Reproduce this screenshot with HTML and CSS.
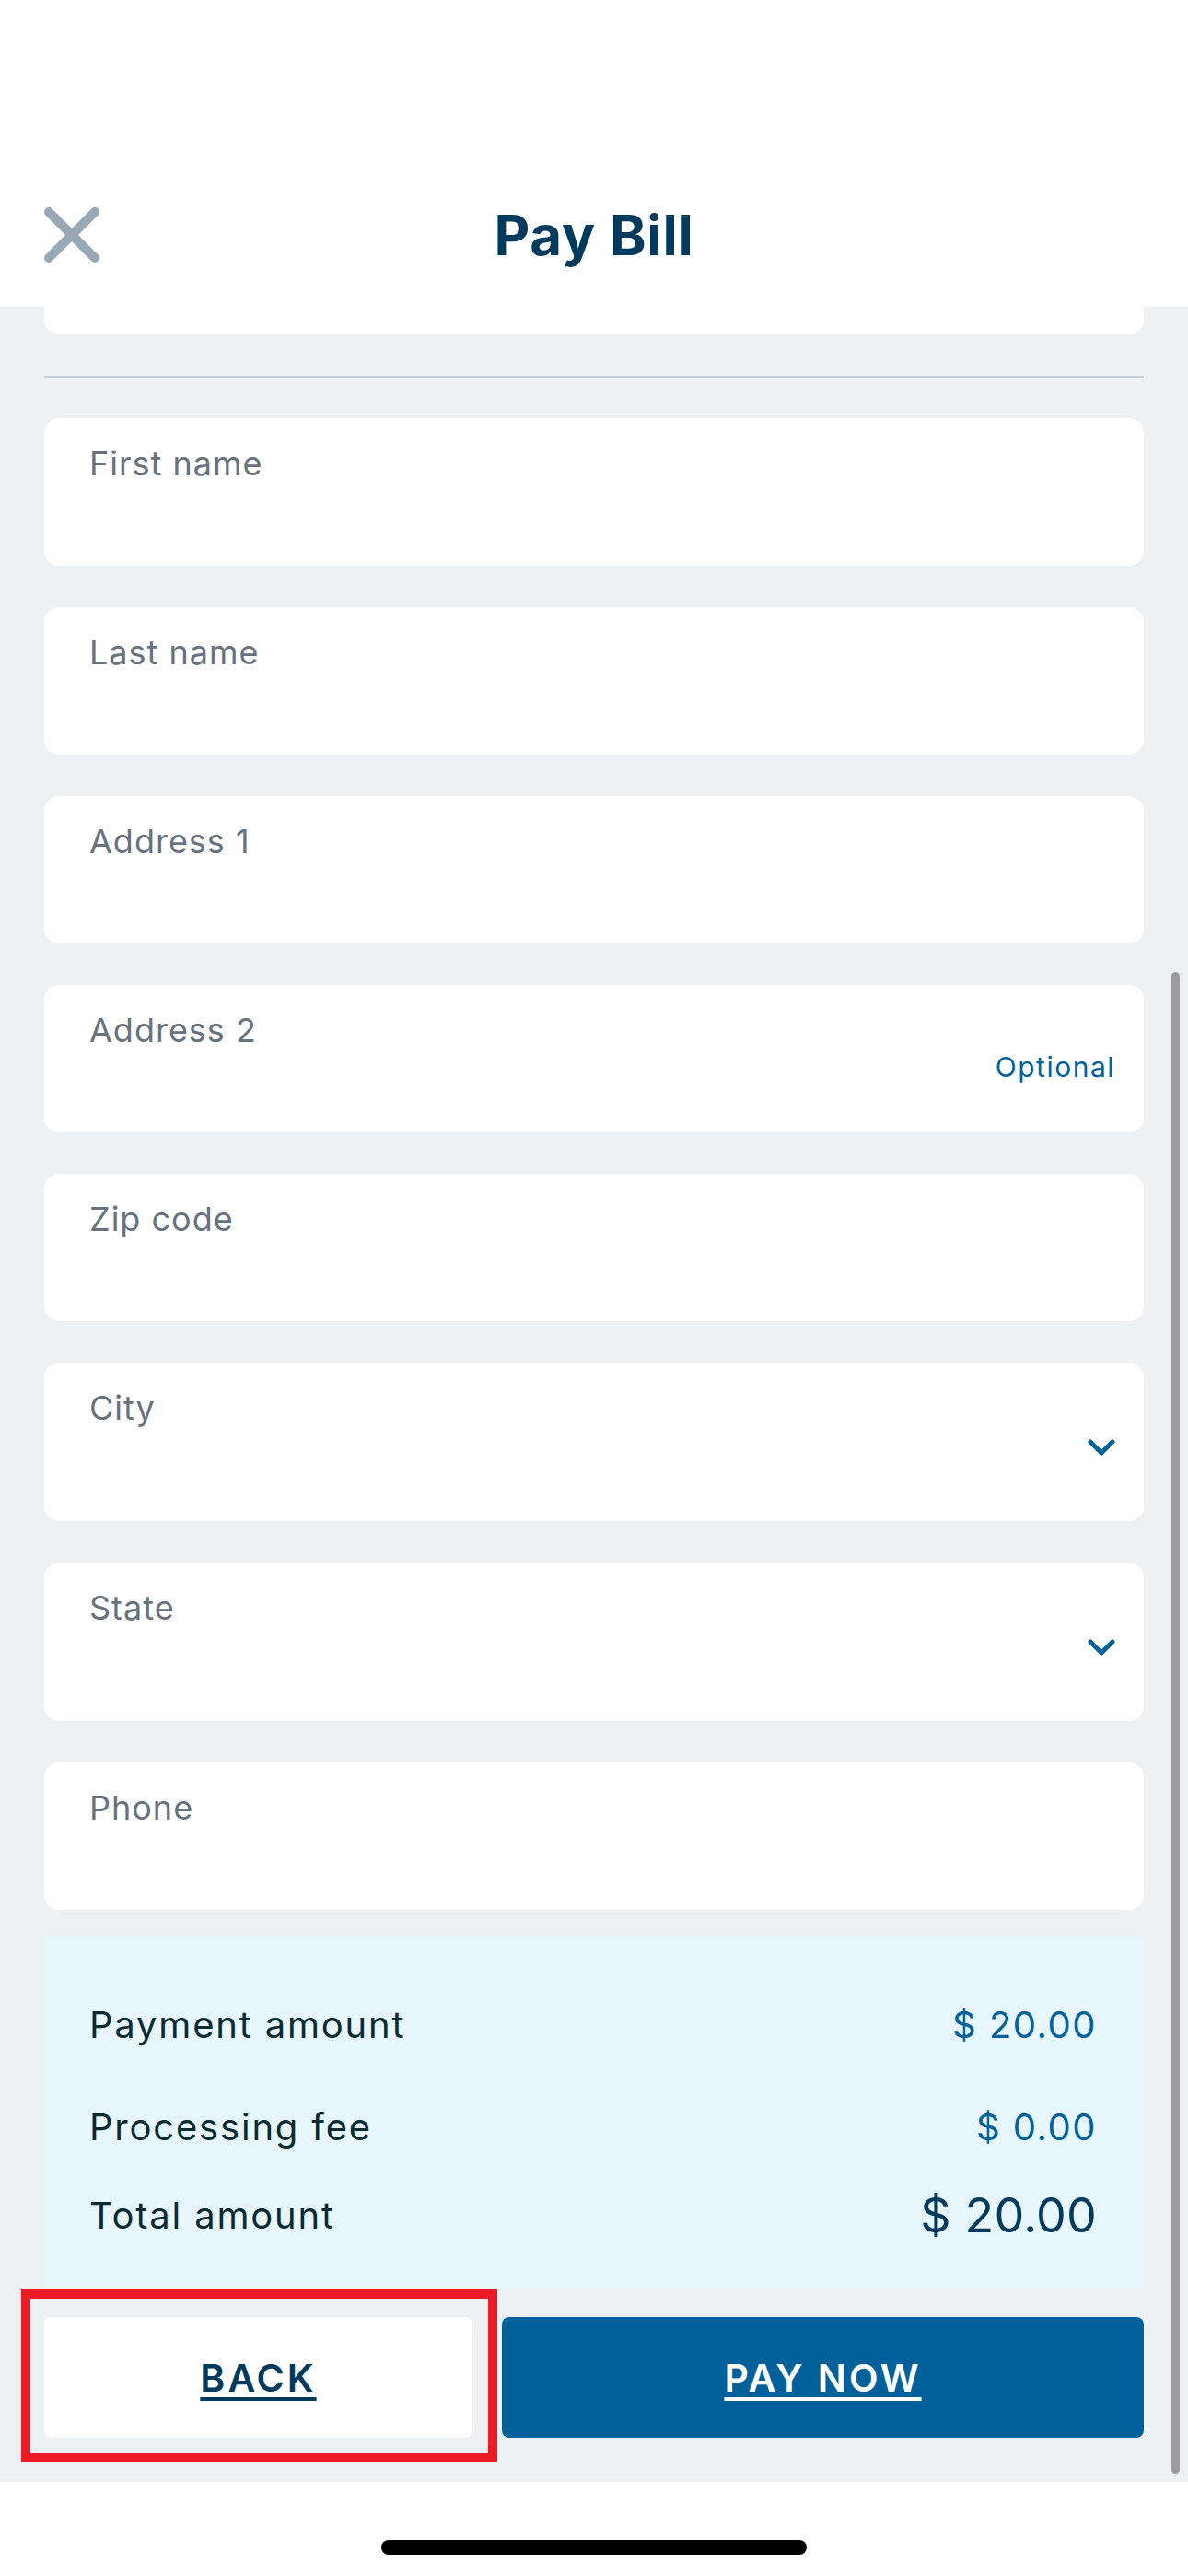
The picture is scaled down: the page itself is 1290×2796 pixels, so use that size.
FILE: index.html
```html
<!DOCTYPE html>
<html lang="en">
<head>
<meta charset="utf-8">
<title>Pay Bill</title>
<link rel="stylesheet" href="styles.css">
</head>
<body>
<div class="screen">
  <header class="header">
    <div class="header-row">
      <button class="close" aria-label="Close">
        <svg width="60" height="60" viewBox="0 0 60 60"><path d="M5 5 L55 55 M55 5 L5 55" stroke="#9aa7b4" stroke-width="10" stroke-linecap="round" fill="none"/></svg>
      </button>
      <h1 class="title">Pay Bill</h1>
      <span class="spacer"></span>
    </div>
  </header>

  <main class="content">
    <div class="card card-partial"></div>
    <hr class="divider">

    <div class="fields">
      <div class="card field"><span class="label">First name</span></div>
      <div class="card field"><span class="label">Last name</span></div>
      <div class="card field"><span class="label">Address 1</span></div>
      <div class="card field"><span class="label">Address 2</span><span class="optional">Optional</span></div>
      <div class="card field"><span class="label">Zip code</span></div>
      <div class="card field select"><span class="label">City</span>
        <svg class="chevron" width="30" height="18" viewBox="0 0 30 18"><path d="M3 3 L15 15 L27 3" stroke="#00629b" stroke-width="5" stroke-linecap="round" stroke-linejoin="round" fill="none"/></svg>
      </div>
      <div class="card field select"><span class="label">State</span>
        <svg class="chevron" width="30" height="18" viewBox="0 0 30 18"><path d="M3 3 L15 15 L27 3" stroke="#00629b" stroke-width="5" stroke-linecap="round" stroke-linejoin="round" fill="none"/></svg>
      </div>
      <div class="card field"><span class="label">Phone</span></div>
    </div>

    <section class="summary">
      <div class="sum-row"><span class="sum-label">Payment amount</span><span class="sum-value">$ 20.00</span></div>
      <div class="sum-row"><span class="sum-label">Processing fee</span><span class="sum-value">$ 0.00</span></div>
      <div class="sum-row total"><span class="sum-label">Total amount</span><span class="sum-total">$ 20.00</span></div>
    </section>

    <div class="actions">
      <button class="btn btn-back">BACK</button>
      <button class="btn btn-pay">PAY NOW</button>
    </div>
  </main>

  <footer class="home-bar"><span class="home-indicator"></span></footer>

  <div class="highlight"></div>
  <div class="scrollbar"></div>
</div>
</body>
</html>
```

FILE: styles.css
```css
* { box-sizing: border-box; }
html, body { margin: 0; padding: 0; }
body {
  font-family: Inter, "Noto Sans", "Liberation Sans", sans-serif;
  background: #ffffff;
}
.screen {
  position: relative;
  width: 1290px;
  height: 2796px;
  background: #edf1f4;
  overflow: hidden;
}
.header {
  background: #ffffff;
  height: 333px;
  padding: 195px 48px 0 48px;
}
.header-row {
  height: 120px;
  display: flex;
  align-items: center;
  justify-content: space-between;
}
.close {
  width: 60px;
  height: 60px;
  padding: 0;
  border: 0;
  background: none;
  display: block;
}
.close svg { display: block; }
.spacer { width: 60px; }
.title {
  margin: 0;
  font-size: 60px;
  font-weight: 700;
  color: #003a5c;
  letter-spacing: 0.8px;
}
.content {
  padding: 0 48px 48px 48px;
}
.card {
  background: #ffffff;
  border-radius: 16px;
}
.card-partial {
  height: 30px;
  border-radius: 0 0 16px 16px;
}
.divider {
  margin: 45px 0 0 0;
  border: 0;
  height: 2px;
  background: #c7ced8;
}
.fields {
  margin-top: 44px;
  display: flex;
  flex-direction: column;
  gap: 45px;
}
.field {
  height: 160px;
  padding: 27px 31px 0 49px;
  display: flex;
  justify-content: space-between;
  align-items: flex-start;
}
.field.select { height: 172px; }
.label {
  font-size: 36px;
  line-height: 44px;
  color: #68727c;
  letter-spacing: 1px;
}
.optional {
  margin-top: 44px;
  font-size: 30px;
  line-height: 36px;
  color: #00629b;
  letter-spacing: 1.5px;
}
.chevron {
  margin-top: 56px;
  display: block;
}
.summary {
  margin-top: 29px;
  height: 382px;
  background: #e8f6fe;
  padding: 72px 51px 0 49px;
}
.sum-row {
  display: flex;
  justify-content: space-between;
  align-items: baseline;
  height: 48px;
}
.sum-row + .sum-row { margin-top: 63px; }
.sum-row.total { margin-top: 40px; height: 64px; align-items: center; }
.sum-label {
  font-size: 40px;
  line-height: 48px;
  color: #0a2b31;
  letter-spacing: 1.8px;
}
.sum-value {
  font-size: 40px;
  line-height: 48px;
  color: #00629b;
  letter-spacing: 1.5px;
}
.sum-total {
  font-size: 52px;
  line-height: 64px;
  color: #003a5c;
  letter-spacing: 0.2px;
}
.actions {
  margin-top: 31px;
  display: flex;
  gap: 32px;
  height: 131px;
}
.btn {
  border: 0;
  border-radius: 8px;
  font-family: Inter, "Noto Sans", "Liberation Sans", sans-serif;
  font-size: 41px;
  font-weight: 600;
  letter-spacing: 3px;
  text-decoration: underline;
  text-decoration-thickness: 4px;
  text-underline-offset: 6px;
  height: 131px;
  padding: 0;
}
.btn-back {
  flex: 0 0 465px;
  background: #ffffff;
  color: #003a5c;
}
.btn-pay {
  flex: 1 1 auto;
  background: #00619a;
  color: #ffffff;
}
.home-bar {
  background: #ffffff;
  height: 102px;
  display: flex;
  justify-content: center;
  padding-top: 63px;
}
.home-indicator {
  width: 462px;
  height: 16px;
  border-radius: 8px;
  background: #000000;
}
.highlight {
  position: absolute;
  left: 23px;
  top: 2485px;
  width: 517px;
  height: 187px;
  border: 10px solid #ed1c24;
}
.scrollbar {
  position: absolute;
  left: 1272px;
  top: 1055px;
  width: 9px;
  height: 1630px;
  border-radius: 5px;
  background: #9b9b9f;
}
```
